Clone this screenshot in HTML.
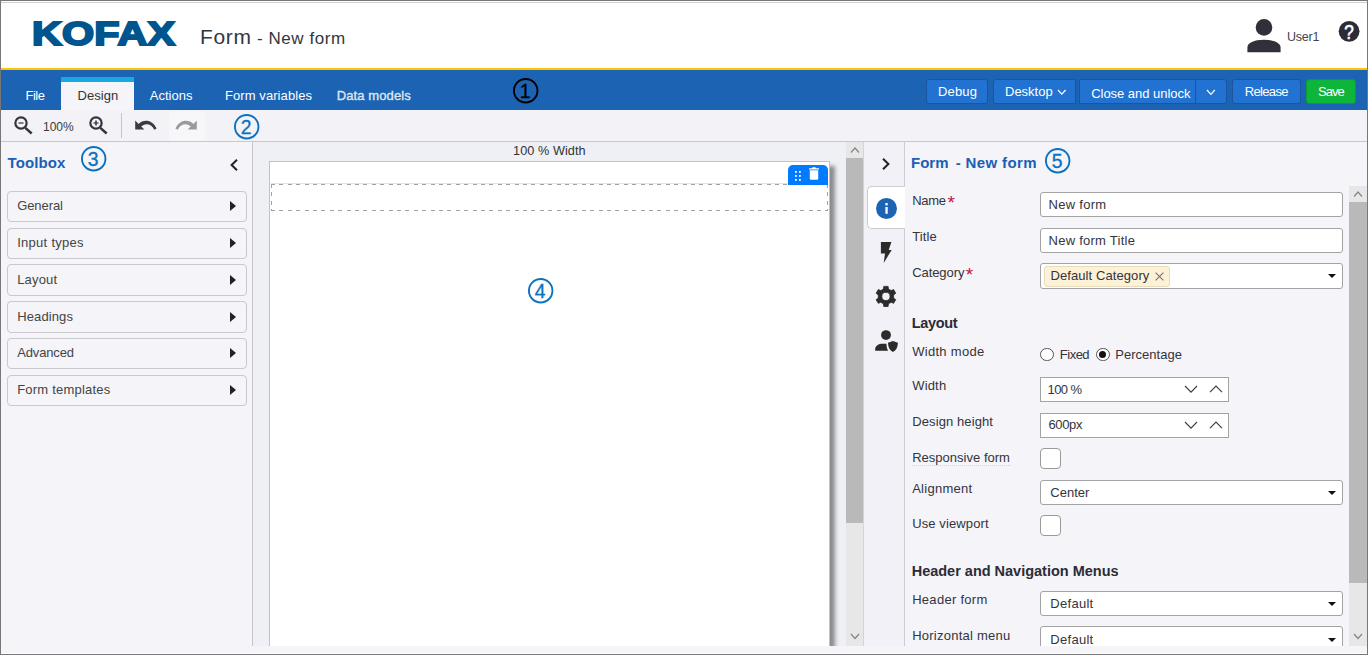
<!DOCTYPE html>
<html><head><meta charset="utf-8"><title>Form - New form</title>
<style>
*{box-sizing:border-box;margin:0;padding:0}
html,body{width:1368px;height:655px;overflow:hidden;background:#fff}
body{font-family:"Liberation Sans","DejaVu Sans",sans-serif;font-size:13px;color:#333;position:relative}
.a{position:absolute}
.t{position:absolute;white-space:pre;line-height:1}
svg{overflow:visible}
.btn{position:absolute;top:79px;height:25px;background:#2272d2;border:1px solid #1a55a0;border-radius:3px}
.tb{position:absolute;left:7px;width:240px;height:31px;border:1px solid #c8c8cd;border-radius:4px;background:#f4f4f9}
.inp{position:absolute;background:#fff;border:1px solid #a3a3a3;border-radius:3px}
.chk{position:absolute;left:1040px;width:21px;height:21px;background:#fff;border:1px solid #9a9a9a;border-radius:4px}

</style></head><body>
<div class="a" style="left:1px;top:2px;width:1366px;height:1px;background:#d0d0d0"></div>
<div class="a" style="left:1px;top:68px;width:1366px;height:2px;background:#ffc400"></div>
<div class="a" style="left:1px;top:70px;width:1366px;height:40px;background:#1c63b4"></div>
<div class="a" style="left:1px;top:110px;width:1366px;height:32px;background:#f2f2f7;border-bottom:1px solid #c9c9cd"></div>
<div class="a" style="left:1px;top:142px;width:252px;height:504px;background:#f4f4f9;border-right:1px solid #c6c6ca"></div>
<div class="a" style="left:253px;top:142px;width:593px;height:504px;background:#eff0f6"></div>
<div class="a" style="left:863px;top:142px;width:42px;height:504px;background:#f1f1f7;border-right:1px solid #cdcdd1"></div>
<div class="a" style="left:905px;top:142px;width:462px;height:504px;background:#f4f4f9"></div>
<div class="a" style="left:1px;top:646px;width:1366px;height:7px;background:#f4f4f9;z-index:20"></div>
<span class="t" id="logo" style="left:32.2px;top:17.4px;font-size:33px;font-weight:700;color:#00558f;transform-origin:0 0;transform:scale(1.25,1);-webkit-text-stroke:2px #00558f;letter-spacing:0.2px">KOFAX</span>
<span class="t" style="left:200.00px;top:26.22px;font-size:21px;color:#333640;letter-spacing:0.667px;">Form</span>
<span class="t" style="left:257.00px;top:29.61px;font-size:17px;color:#333640;letter-spacing:0.556px;">- New form</span>
<svg class="a" style="left:1246px;top:18px" width="36" height="36" viewBox="0 0 36 36"><circle cx="18" cy="9.4" r="8.3" fill="#2f303a"/><path d="M1.4 34.2 V29.5 C1.4 25 8 21.8 18 21.8 S34.6 25 34.6 29.5 V34.2 Z" fill="#2f303a"/></svg>
<span class="t" style="left:1287.00px;top:31.42px;font-size:12.5px;color:#444;letter-spacing:-0.250px;">User1</span>
<svg class="a" style="left:1338px;top:21px" width="22" height="22" viewBox="0 0 22 22"><circle cx="11.1" cy="10.3" r="10.4" fill="#2b2c36"/><text transform="translate(11.1 0) scale(0.86 1)" x="0" y="17.6" text-anchor="middle" font-family='"Liberation Sans",sans-serif' font-size="20" fill="#fff" stroke="#fff" stroke-width="0.6">?</text></svg>
<div class="a" style="left:61px;top:77px;width:73px;height:33px;background:#f4f4f9;border-top:5px solid #16a9e2"></div>
<span class="t" style="left:25.50px;top:89.00px;font-size:13px;color:#fff;letter-spacing:-0.500px;">File</span>
<span class="t" style="left:77.50px;top:89.00px;font-size:13px;color:#333;letter-spacing:0.060px;">Design</span>
<span class="t" style="left:149.70px;top:89.00px;font-size:13px;color:#fff;letter-spacing:0.050px;">Actions</span>
<span class="t" style="left:225.00px;top:89.00px;font-size:13px;color:#fff;letter-spacing:0.077px;">Form variables</span>
<span class="t" style="left:336.70px;top:88.50px;font-size:13px;color:#dfe6f1;letter-spacing:0.110px;-webkit-text-stroke:0.35px #dfe6f1;">Data models</span>
<svg class="a" style="left:511.95px;top:76.80px" width="27.4" height="27.4" viewBox="0 0 27.4 27.4"><circle cx="13.7" cy="13.7" r="11.75" fill="none" stroke="#000" stroke-width="1.9"/><text x="13.1" y="20.65" text-anchor="middle" font-family='"Liberation Sans","DejaVu Sans",sans-serif' font-size="19.4" fill="#000" stroke="#000" stroke-width="0.3">1</text></svg>
<div class="btn" style="left:926px;width:62px;border-radius:3px"></div>
<div class="btn" style="left:993px;width:83px;border-radius:3px 0 0 3px"></div>
<div class="btn" style="left:1079px;width:148px;border-radius:0 3px 3px 0"></div>
<div class="btn" style="left:1232px;width:69px;border-radius:3px"></div>
<div class="a" style="left:1195px;top:80px;width:1px;height:23px;background:#1a55a0"></div>
<div class="btn" style="left:1306px;width:50px;background:#0db53a;border-color:#0c9a32"></div>
<span class="t" style="left:938.00px;top:84.80px;font-size:13px;color:#fff;letter-spacing:0.175px;">Debug</span>
<span class="t" style="left:1005.00px;top:84.80px;font-size:13px;color:#fff;letter-spacing:0.000px;">Desktop</span>
<span class="t" style="left:1091.20px;top:86.50px;font-size:13px;color:#fff;letter-spacing:-0.027px;">Close and unlock</span>
<span class="t" style="left:1244.70px;top:84.80px;font-size:13px;color:#fff;letter-spacing:-0.650px;">Release</span>
<span class="t" style="left:1318.00px;top:84.80px;font-size:13px;color:#fff;letter-spacing:-1.000px;">Save</span>
<svg class="a" style="left:1057.5px;top:89.8px" width="7.6" height="4.2" viewBox="0 0 7.6 4.2"><path d="M0 0 L3.8 4.2 L7.6 0" fill="none" stroke="#fff" stroke-width="1.2"/></svg>
<svg class="a" style="left:1207px;top:89.5px" width="7.8" height="4.4" viewBox="0 0 7.8 4.4"><path d="M0 0 L3.9 4.4 L7.8 0" fill="none" stroke="#fff" stroke-width="1.2"/></svg>
<svg class="a" style="left:11.399999999999999px;top:112.75px" width="24" height="24" viewBox="0 0 24 24"><circle cx="10" cy="10" r="5.65" fill="none" stroke="#33343e" stroke-width="2.2"/><path d="M14.3 14.9 L20.7 20.5" stroke="#33343e" stroke-width="2.5"/><path d="M7.5 10 H12.5" stroke="#666770" stroke-width="1.7"/></svg>
<span class="t" style="left:43.00px;top:120.84px;font-size:12px;color:#3a3a40;letter-spacing:0.000px;">100%</span>
<svg class="a" style="left:85.9px;top:112.75px" width="24" height="24" viewBox="0 0 24 24"><circle cx="10" cy="10" r="5.65" fill="none" stroke="#33343e" stroke-width="2.2"/><path d="M14.3 14.9 L20.7 20.5" stroke="#33343e" stroke-width="2.5"/><path d="M7.5 10 H12.5" stroke="#666770" stroke-width="1.7"/><path d="M10 7.5 V12.5" stroke="#44454f" stroke-width="1.7"/></svg>
<div class="a" style="left:121px;top:113px;width:1px;height:25px;background:#c4c4c8"></div>
<div class="a" style="left:169px;top:111px;width:36px;height:30px;background:#f7f7fa;border-radius:4px"></div>
<svg class="a" style="left:134.6px;top:120.2px" width="22" height="10" viewBox="0 0 22 10"><path d="M0.2 0.6 L0.2 9.6 L9.4 9.6 L6.2 6.6 C9.5 2.9 16 2.9 19.3 9.8 L21.6 8.6 C17.6 -0.6 8.6 -1.2 3.6 4 Z" fill="#3a3b45"/></svg>
<svg class="a" style="left:174.8px;top:120.2px" width="22" height="10" viewBox="0 0 22 10"><g transform="translate(22,0) scale(-1,1)"><path d="M0.2 0.6 L0.2 9.6 L9.4 9.6 L6.2 6.6 C9.5 2.9 16 2.9 19.3 9.8 L21.6 8.6 C17.6 -0.6 8.6 -1.2 3.6 4 Z" fill="#9a9a9a"/></g></svg>
<svg class="a" style="left:233.05px;top:112.80px" width="27.4" height="27.4" viewBox="0 0 27.4 27.4"><circle cx="13.7" cy="13.7" r="11.75" fill="none" stroke="#0b72c0" stroke-width="1.9"/><text x="13.1" y="20.65" text-anchor="middle" font-family='"Liberation Sans","DejaVu Sans",sans-serif' font-size="19.4" fill="#0b72c0" stroke="#0b72c0" stroke-width="0.3">2</text></svg>
<span class="t" style="left:7.60px;top:155.40px;font-size:15px;font-weight:700;color:#1a5fb4;letter-spacing:0.100px;">Toolbox</span>
<svg class="a" style="left:79.85px;top:144.70px" width="27.4" height="27.4" viewBox="0 0 27.4 27.4"><circle cx="13.7" cy="13.7" r="11.75" fill="none" stroke="#0b72c0" stroke-width="1.9"/><text x="13.1" y="20.65" text-anchor="middle" font-family='"Liberation Sans","DejaVu Sans",sans-serif' font-size="19.4" fill="#0b72c0" stroke="#0b72c0" stroke-width="0.3">3</text></svg>
<svg class="a" style="left:230px;top:158.5px" width="8" height="12" viewBox="0 0 8 12"><path d="M7 0.8 L1.6 6 L7 11.2" fill="none" stroke="#222" stroke-width="2"/></svg>
<div class="tb" style="top:191px;height:31px"></div>
<span class="t" style="left:17.20px;top:199.00px;font-size:13px;color:#444;letter-spacing:-0.083px;">General</span>
<svg class="a" style="left:230.2px;top:201.2px" width="6" height="10" viewBox="0 0 6 10"><path d="M0 0 L6 5 L0 10 Z" fill="#222"/></svg>
<div class="tb" style="top:228px;height:31px"></div>
<span class="t" style="left:17.20px;top:235.70px;font-size:13px;color:#444;letter-spacing:0.280px;">Input types</span>
<svg class="a" style="left:230.2px;top:237.89999999999998px" width="6" height="10" viewBox="0 0 6 10"><path d="M0 0 L6 5 L0 10 Z" fill="#222"/></svg>
<div class="tb" style="top:264px;height:32px"></div>
<span class="t" style="left:17.20px;top:272.70px;font-size:13px;color:#444;letter-spacing:0.160px;">Layout</span>
<svg class="a" style="left:230.2px;top:274.9px" width="6" height="10" viewBox="0 0 6 10"><path d="M0 0 L6 5 L0 10 Z" fill="#222"/></svg>
<div class="tb" style="top:301px;height:32px"></div>
<span class="t" style="left:17.20px;top:309.70px;font-size:13px;color:#444;letter-spacing:0.114px;">Headings</span>
<svg class="a" style="left:230.2px;top:311.9px" width="6" height="10" viewBox="0 0 6 10"><path d="M0 0 L6 5 L0 10 Z" fill="#222"/></svg>
<div class="tb" style="top:338px;height:31px"></div>
<span class="t" style="left:17.20px;top:346.00px;font-size:13px;color:#444;letter-spacing:-0.136px;">Advanced</span>
<svg class="a" style="left:230.2px;top:348.2px" width="6" height="10" viewBox="0 0 6 10"><path d="M0 0 L6 5 L0 10 Z" fill="#222"/></svg>
<div class="tb" style="top:375px;height:31px"></div>
<span class="t" style="left:17.20px;top:382.80px;font-size:13px;color:#444;letter-spacing:0.215px;">Form templates</span>
<svg class="a" style="left:230.2px;top:385.0px" width="6" height="10" viewBox="0 0 6 10"><path d="M0 0 L6 5 L0 10 Z" fill="#222"/></svg>
<span class="t" style="left:513.00px;top:144.65px;font-size:12.7px;color:#333;letter-spacing:0.070px;">100 % Width</span>
<div class="a" style="left:269px;top:161px;width:561px;height:500px;background:#fff;border:1px solid #c2c2c2;box-shadow:5px 5px 4px rgba(0,0,0,.42)"></div>
<div class="a" style="left:271px;top:183px;width:557px;height:1px;background:#e3e3e3"></div>
<div class="a" style="left:271px;top:184px;width:557px;height:1px;background:repeating-linear-gradient(90deg,#a2a2a2 0,#a2a2a2 4px,transparent 4px,transparent 8.4px)"></div>
<div class="a" style="left:271px;top:210px;width:557px;height:1px;background:repeating-linear-gradient(90deg,#a2a2a2 0,#a2a2a2 4px,transparent 4px,transparent 8.4px)"></div>
<div class="a" style="left:271px;top:184px;width:1px;height:27px;background:repeating-linear-gradient(180deg,#a2a2a2 0,#a2a2a2 4px,transparent 4px,transparent 8.4px)"></div>
<div class="a" style="left:827px;top:184px;width:1px;height:27px;background:repeating-linear-gradient(180deg,#a2a2a2 0,#a2a2a2 4px,transparent 4px,transparent 8.4px)"></div>
<div class="a" style="left:788px;top:165px;width:40px;height:19.5px;background:#007bff;border-radius:5px 5px 0 0"></div>
<svg class="a" style="left:795.4px;top:171.2px" width="6" height="10" viewBox="0 0 6 10"><rect x="0" y="0" width="1.8" height="1.8" fill="#fff"/><rect x="0" y="4" width="1.8" height="1.8" fill="#fff"/><rect x="0" y="8" width="1.8" height="1.8" fill="#fff"/><rect x="4" y="0" width="1.8" height="1.8" fill="#fff"/><rect x="4" y="4" width="1.8" height="1.8" fill="#fff"/><rect x="4" y="8" width="1.8" height="1.8" fill="#fff"/></svg>
<svg class="a" style="left:809px;top:167.4px" width="10" height="13" viewBox="0 0 10 13"><path d="M0 1.2 H3 L3.6 0.2 H6.4 L7 1.2 H10 V2.4 H0 Z M0.8 3.2 H9.2 V11.6 Q9.2 12.8 8 12.8 H2 Q0.8 12.8 0.8 11.6 Z" fill="#fff"/></svg>
<svg class="a" style="left:527.25px;top:276.80px" width="27.4" height="27.4" viewBox="0 0 27.4 27.4"><circle cx="13.7" cy="13.7" r="11.75" fill="none" stroke="#0b72c0" stroke-width="1.9"/><text x="13.1" y="20.65" text-anchor="middle" font-family='"Liberation Sans","DejaVu Sans",sans-serif' font-size="19.4" fill="#0b72c0" stroke="#0b72c0" stroke-width="0.3">4</text></svg>
<div class="a" style="left:846px;top:142px;width:17px;height:504px;background:#e7e7e7"></div>
<div class="a" style="left:846px;top:158px;width:17px;height:365px;background:#b9b9b9"></div>
<div class="a" style="left:863px;top:142px;width:1px;height:504px;background:#d4d4d8"></div>
<svg class="a" style="left:850.5px;top:147.5px" width="8" height="4.5" viewBox="0 0 8 4.5"><path d="M0 4.5 L4.0 0 L8 4.5" fill="none" stroke="#858585" stroke-width="1.2"/></svg>
<svg class="a" style="left:850.5px;top:633.5px" width="8" height="4.5" viewBox="0 0 8 4.5"><path d="M0 0 L4.0 4.5 L8 0" fill="none" stroke="#858585" stroke-width="1.2"/></svg>
<svg class="a" style="left:882.2px;top:158px" width="8" height="12" viewBox="0 0 8 12"><path d="M1 0.8 L6.4 6 L1 11.2" fill="none" stroke="#222" stroke-width="2"/></svg>
<div class="a" style="left:867px;top:186px;width:38px;height:43px;background:#fff;border:1px solid #cdcdd1;border-right:none;border-radius:5px 0 0 5px"></div>
<svg class="a" style="left:876px;top:198px" width="21" height="21" viewBox="0 0 21 21"><circle cx="10.5" cy="10.5" r="10.5" fill="#1c63b4"/><rect x="9.4" y="9" width="2.3" height="6.8" fill="#fff"/><rect x="9.4" y="5" width="2.3" height="2.4" fill="#fff"/></svg>
<svg class="a" style="left:880px;top:241px" width="13" height="23" viewBox="0 0 13 23"><path d="M0.9 0.9 H11.4 L8.7 8.9 H11.7 L3.7 21.9 L5 12.5 H0.9 Z" fill="#2b2b2b"/></svg>
<svg class="a" style="left:874px;top:284px" width="24" height="24" viewBox="0 0 24 24"><path d="M9.46 5.06 L9.81 2.38 L14.09 2.38 L14.44 5.06 L17.11 6.60 L19.60 5.56 L21.75 9.27 L19.60 10.91 L19.60 13.99 L21.75 15.63 L19.60 19.34 L17.11 18.30 L14.44 19.84 L14.09 22.52 L9.81 22.52 L9.46 19.84 L6.79 18.30 L4.30 19.34 L2.15 15.63 L4.30 13.99 L4.30 10.91 L2.15 9.27 L4.30 5.56 L6.79 6.60 Z M7.85 12.45 a4.1 4.1 0 1 0 8.2 0 a4.1 4.1 0 1 0 -8.2 0 Z" fill="#2b2b2b" fill-rule="evenodd" stroke="#2b2b2b" stroke-width="0.8" stroke-linejoin="round"/></svg>
<svg class="a" style="left:875px;top:330px" width="24" height="23" viewBox="0 0 24 23"><circle cx="11" cy="5.1" r="4.95" fill="#2b2b2b"/><path d="M0.2 20.7 V19.4 C0.2 15.6 3.6 13.7 7.6 13.7 H11.5 V14.2 C11.5 17 12.1 19.2 13.2 20.7 Z" fill="#2b2b2b"/><path d="M17.95 10.9 L22.9 12.8 C22.9 17.2 21.2 20.4 17.95 21.9 C14.7 20.4 13 17.2 13 12.8 Z" fill="#2b2b2b"/></svg>
<span class="t" style="left:911.00px;top:154.90px;font-size:15px;font-weight:700;color:#1a5fb4;letter-spacing:0.000px;">Form</span>
<span class="t" style="left:955.70px;top:154.90px;font-size:15px;font-weight:700;color:#1a5fb4;letter-spacing:0.367px;">- New form</span>
<svg class="a" style="left:1044.05px;top:147.10px" width="27.4" height="27.4" viewBox="0 0 27.4 27.4"><circle cx="13.7" cy="13.7" r="11.75" fill="none" stroke="#0b72c0" stroke-width="1.9"/><text x="13.1" y="20.65" text-anchor="middle" font-family='"Liberation Sans","DejaVu Sans",sans-serif' font-size="19.4" fill="#0b72c0" stroke="#0b72c0" stroke-width="0.3">5</text></svg>
<span class="t" style="left:912.20px;top:193.70px;font-size:13px;color:#33343c;letter-spacing:-0.267px;">Name</span>
<span class="t" style="left:947.40px;top:192.52px;font-size:19px;color:#c2143e;">*</span>
<span class="t" style="left:912.20px;top:229.90px;font-size:13px;color:#33343c;letter-spacing:0.100px;">Title</span>
<span class="t" style="left:912.20px;top:266.20px;font-size:13px;color:#33343c;letter-spacing:-0.071px;">Category</span>
<span class="t" style="left:965.80px;top:265.02px;font-size:19px;color:#c2143e;">*</span>
<span class="t" style="left:911.70px;top:315.83px;font-size:14.5px;font-weight:700;color:#2b2c35;letter-spacing:-0.320px;">Layout</span>
<span class="t" style="left:912.20px;top:345.20px;font-size:13px;color:#33343c;letter-spacing:0.289px;">Width mode</span>
<span class="t" style="left:912.20px;top:378.90px;font-size:13px;color:#33343c;letter-spacing:0.175px;">Width</span>
<span class="t" style="left:912.20px;top:414.80px;font-size:13px;color:#33343c;letter-spacing:0.108px;">Design height</span>
<span class="t" style="left:912.20px;top:450.70px;font-size:13px;color:#33343c;letter-spacing:0.014px;">Responsive form</span>
<div class="a" style="left:912px;top:465px;width:99px;height:1px;border-top:1px dotted #d4d4dc"></div>
<span class="t" style="left:912.20px;top:481.80px;font-size:13px;color:#33343c;letter-spacing:0.262px;">Alignment</span>
<span class="t" style="left:912.20px;top:517.40px;font-size:13px;color:#33343c;letter-spacing:0.109px;">Use viewport</span>
<span class="t" style="left:911.70px;top:563.73px;font-size:14.5px;font-weight:700;color:#2b2c35;letter-spacing:-0.008px;">Header and Navigation Menus</span>
<span class="t" style="left:912.20px;top:593.00px;font-size:13px;color:#33343c;letter-spacing:0.280px;">Header form</span>
<span class="t" style="left:912.20px;top:628.80px;font-size:13px;color:#33343c;letter-spacing:0.236px;">Horizontal menu</span>
<div class="inp" style="left:1040px;top:192px;width:303px;height:25px;border-radius:3px"></div>
<span class="t" style="left:1048.50px;top:197.80px;font-size:13px;color:#33343c;letter-spacing:0.286px;">New form</span>
<div class="inp" style="left:1040px;top:228px;width:303px;height:25px;border-radius:3px"></div>
<span class="t" style="left:1048.50px;top:233.60px;font-size:13px;color:#33343c;letter-spacing:0.254px;">New form Title</span>
<div class="inp" style="left:1040px;top:263px;width:303px;height:26px;border-radius:3px"></div>
<div class="a" style="left:1044px;top:265.5px;width:125.5px;height:21px;background:#fdf1d6;border:1px solid #e8dcbc;border-radius:3px"></div>
<span class="t" style="left:1050.50px;top:269.00px;font-size:13px;color:#33343c;letter-spacing:0.087px;">Default Category</span>
<svg class="a" style="left:1154.8px;top:271.5px" width="9" height="9" viewBox="0 0 9 9"><path d="M0.6 0.6 L8.4 8.4 M8.4 0.6 L0.6 8.4" stroke="#777" stroke-width="1.1" fill="none"/></svg>
<svg class="a" style="left:1328px;top:274.2px" width="8" height="4" viewBox="0 0 8 4"><path d="M0 0 H8 L4 4 Z" fill="#111"/></svg>
<div class="a" style="left:1040px;top:347.6px;width:13.6px;height:13.6px;border:1px solid #555;border-radius:50%;background:#fff"></div>
<span class="t" style="left:1059.80px;top:347.70px;font-size:13px;color:#33343c;letter-spacing:-0.500px;">Fixed</span>
<div class="a" style="left:1096px;top:347.6px;width:13.6px;height:13.6px;border:1px solid #555;border-radius:50%;background:#fff"></div>
<div class="a" style="left:1099.3px;top:350.9px;width:7px;height:7px;border-radius:50%;background:#111"></div>
<span class="t" style="left:1115.30px;top:347.70px;font-size:13px;color:#33343c;letter-spacing:0.022px;">Percentage</span>
<div class="inp" style="left:1040px;top:377px;width:189px;height:25px;border-radius:0px"></div>
<span class="t" style="left:1047.50px;top:382.80px;font-size:13px;color:#33343c;letter-spacing:-0.550px;">100 %</span>
<svg class="a" style="left:1184.8px;top:386.3px" width="12" height="6.2" viewBox="0 0 12 6.2"><path d="M0 0 L6.0 6.2 L12 0" fill="none" stroke="#3a3a3a" stroke-width="1.1"/></svg>
<svg class="a" style="left:1209.8px;top:386.3px" width="12" height="6.2" viewBox="0 0 12 6.2"><path d="M0 6.2 L6.0 0 L12 6.2" fill="none" stroke="#3a3a3a" stroke-width="1.1"/></svg>
<div class="inp" style="left:1040px;top:413px;width:189px;height:25px;border-radius:0px"></div>
<span class="t" style="left:1048.50px;top:418.30px;font-size:13px;color:#33343c;letter-spacing:-0.375px;">600px</span>
<svg class="a" style="left:1184.8px;top:422.3px" width="12" height="6.2" viewBox="0 0 12 6.2"><path d="M0 0 L6.0 6.2 L12 0" fill="none" stroke="#3a3a3a" stroke-width="1.1"/></svg>
<svg class="a" style="left:1209.8px;top:422.3px" width="12" height="6.2" viewBox="0 0 12 6.2"><path d="M0 6.2 L6.0 0 L12 6.2" fill="none" stroke="#3a3a3a" stroke-width="1.1"/></svg>
<div class="chk" style="top:448px"></div>
<div class="inp" style="left:1040px;top:480px;width:303px;height:25px;border-radius:3px"></div>
<span class="t" style="left:1050.30px;top:485.70px;font-size:13px;color:#33343c;letter-spacing:0.000px;">Center</span>
<svg class="a" style="left:1328px;top:491px" width="8" height="4" viewBox="0 0 8 4"><path d="M0 0 H8 L4 4 Z" fill="#111"/></svg>
<div class="chk" style="top:515px"></div>
<div class="inp" style="left:1040px;top:591px;width:303px;height:25px;border-radius:3px"></div>
<span class="t" style="left:1050.30px;top:596.80px;font-size:13px;color:#33343c;letter-spacing:0.283px;">Default</span>
<svg class="a" style="left:1328px;top:602px" width="8" height="4" viewBox="0 0 8 4"><path d="M0 0 H8 L4 4 Z" fill="#111"/></svg>
<div class="inp" style="left:1040px;top:626px;width:303px;height:25px;border-radius:3px"></div>
<span class="t" style="left:1050.30px;top:632.50px;font-size:13px;color:#33343c;letter-spacing:0.283px;">Default</span>
<svg class="a" style="left:1328px;top:637.5px" width="8" height="4" viewBox="0 0 8 4"><path d="M0 0 H8 L4 4 Z" fill="#111"/></svg>
<div class="a" style="left:1349px;top:186px;width:18px;height:460px;background:#e7e7e7"></div>
<div class="a" style="left:1349px;top:201.5px;width:18px;height:381px;background:#b9b9b9"></div>
<svg class="a" style="left:1353.5px;top:191.5px" width="8" height="4.5" viewBox="0 0 8 4.5"><path d="M0 4.5 L4.0 0 L8 4.5" fill="none" stroke="#858585" stroke-width="1.2"/></svg>
<svg class="a" style="left:1353.5px;top:633.5px" width="8" height="4.5" viewBox="0 0 8 4.5"><path d="M0 0 L4.0 4.5 L8 0" fill="none" stroke="#858585" stroke-width="1.2"/></svg>
<div class="a" style="left:1px;top:653px;width:1366px;height:1px;background:#fff;z-index:21"></div>
<div class="a" style="left:0;top:0;width:1368px;height:655px;border:1px solid #777;z-index:50"></div>
</body></html>
